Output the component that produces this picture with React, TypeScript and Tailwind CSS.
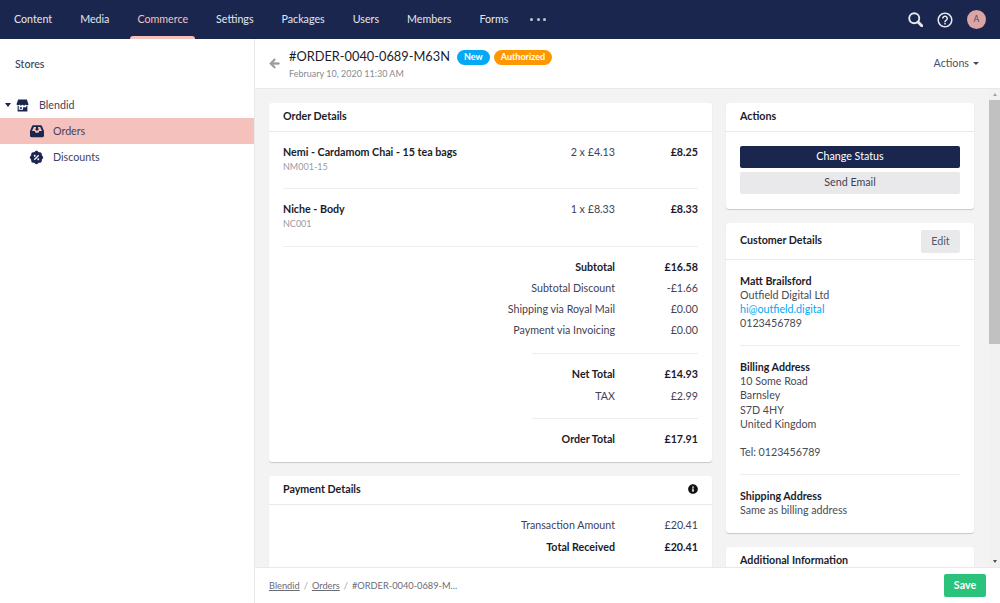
import type { ReactNode } from "react";
import { FaArrowLeft, FaInfoCircle } from "react-icons/fa";
import { MdHelpOutline } from "react-icons/md";
import { RiDiscountPercentFill } from "react-icons/ri";

const navItems = ["Content", "Media", "Commerce", "Settings", "Packages", "Users", "Members", "Forms"];

const SearchIcon = () => (
  <svg viewBox="0 0 24 24" className="w-[15px] h-[15px]" fill="none" stroke="currentColor">
    <circle cx="10" cy="10" r="8" strokeWidth="3" />
    <path d="M16 16l6 6" strokeWidth="4.500" strokeLinecap="round" />
  </svg>
);

const StoreIcon = () => (
  <svg viewBox="0 0 24 24" className="w-[13px] h-[13px] ml-[5px] text-[#1b264f]" fill="currentColor">
    <path d="M4 1h16l3 8.5a2.6 2.6 0 0 1-5 .6 3.2 3.2 0 0 1-6 0 3.2 3.2 0 0 1-6 0 2.6 2.6 0 0 1-5-.6z" />
    <path d="M3 13h2v7h8v-5h6v5h0v-7h2v10H3zM7 15h4v3H7z" />
  </svg>
);

const InboxIcon = () => (
  <svg viewBox="0 0 24 24" className="w-[14px] h-[14px] text-[#1b264f]" fill="currentColor">
    <path fillRule="evenodd" d="M5.5 2h13a2 2 0 0 1 1.8 1.2L24 12v8a2.5 2.5 0 0 1-2.5 2.5h-19A2.5 2.5 0 0 1 0 20v-8l3.7-8.800A2 2 0 0 1 5.500 2zM6.500 5 3.500 12H8l1.500 3h5l1.500-3h4.500l-3-7z" />
    <path d="M10.300 4.500h3.400v3.500H16l-4 4-4-4h2.300z" />
  </svg>
);

const Card = ({ className = "", children }: { className?: string; children: ReactNode }) => (
  <div className={`bg-white rounded-[3px] shadow-[0_1px_1px_rgba(0,0,0,0.18)] ${className}`}>{children}</div>
);

const CardHeader = ({ title, children }: { title: string; children?: ReactNode }) => (
  <div className="h-[29px] shrink-0 px-[14px] pb-[2px] flex items-center justify-between border-b border-[#e9e9eb]">
    <span className="font-bold text-[#1b1b2b]">{title}</span>
    {children}
  </div>
);

const TotalRow = ({ label, value, bold, h = "h-[21px]" }: { label: string; value: string; bold?: boolean; h?: string }) => (
  <div className={`flex items-center justify-end ${h} ${bold ? "font-bold text-[#1b1b2b]" : "text-[#3f4254]"}`}>
    <span>{label}</span>
    <span className="w-[83px] text-right">{value}</span>
  </div>
);

const LineItem = ({ name, sku, qty, total, h }: { name: string; sku: string; qty: string; total: string; h: string }) => (
  <div className={`pt-[13px] flex items-start border-b border-[#eeeeef] ${h}`}>
    <div className="flex-1">
      <div className="font-bold text-[#1b1b2b] leading-[14px]">{name}</div>
      <div className="text-[9px] text-[#9a9aa2] leading-[14px] mt-px">{sku}</div>
    </div>
    <div className="w-[60px] text-right leading-[14px] text-[#3f4254]">{qty}</div>
    <div className="w-[83px] text-right leading-[14px] font-bold text-[#1b1b2b]">{total}</div>
  </div>
);

export default function App() {
  return (
    <div className="w-[1000px] h-[603px] overflow-hidden flex flex-col bg-white text-[10.7px] font-['Lato','Liberation_Sans',sans-serif]">
      {/* Top bar */}
      <div className="h-[39px] shrink-0 bg-[#1b264f] flex items-center justify-between pr-[14px]">
        <div className="flex h-full items-center text-[#e4e6ee] pl-[7px]">
          {navItems.map((item) => (
            <div key={item} className={`relative h-full flex items-center px-[7px] mr-[14px] ${item === "Commerce" ? "text-[#f5c1bc]" : ""}`}>
              {item}
              {item === "Commerce" && (
                <div className="absolute left-0 right-0 bottom-0 h-[3px] bg-[#f5c1bc] rounded-t-[3px]" />
              )}
            </div>
          ))}
          <div className="flex gap-[3.5px] ml-px">
            <div className="w-[3px] h-[3px] rounded-full bg-[#c4c8d6]" />
            <div className="w-[3px] h-[3px] rounded-full bg-[#c4c8d6]" />
            <div className="w-[3px] h-[3px] rounded-full bg-[#c4c8d6]" />
          </div>
        </div>
        <div className="flex items-center gap-[13px] text-[#e9eaf0]">
          <SearchIcon />
          <MdHelpOutline className="w-[18px] h-[18px]" />
          <div className="w-[19px] h-[19px] rounded-full bg-[#d9a5a5] text-[#5c4050] text-[8.5px] flex items-center justify-center">A</div>
        </div>
      </div>

      <div className="flex-1 flex min-h-0">
        {/* Tree */}
        <div className="w-[255px] shrink-0 border-r border-[#e9e9eb] text-[#3f4460]">
          <div className="h-[50px] pl-[15px] flex items-center font-medium text-[#3a3f58]">Stores</div>
          <div className="h-[26px] mt-[3px] flex items-center pl-[5px]">
            <div className="w-0 h-0 border-x-[3px] border-x-transparent border-t-[4px] border-t-[#1b264f]" />
            <StoreIcon />
            <span className="ml-[10px]">Blendid</span>
          </div>
          <div className="h-[26px] flex items-center pl-[30px] bg-[#f5c1bc]">
            <InboxIcon />
            <span className="ml-[9px]">Orders</span>
          </div>
          <div className="h-[26px] flex items-center pl-[29px]">
            <RiDiscountPercentFill className="w-[15px] h-[15px] text-[#1b264f]" />
            <span className="ml-[9px]">Discounts</span>
          </div>
        </div>

        <div className="flex-1 min-w-0 flex flex-col">
          {/* Page header */}
          <div className="h-[50px] shrink-0 border-b border-[#e9e9eb] flex items-center pl-[14px] pr-[21px]">
            <FaArrowLeft className="w-[11px] h-[11px] text-[#9a9a9f] mt-[-1px]" stroke="currentColor" strokeWidth={30} />
            <div className="ml-[9px]">
              <div className="flex items-center gap-[4px] h-[20px]">
                <span className="text-[12.8px] text-[#1b1b2b] mr-[3px]">#ORDER-0040-0689-M63N</span>
                <span className="h-[15px] w-[33px] rounded-full bg-[#03a9f4] text-white font-bold text-[9px] flex items-center justify-center">New</span>
                <span className="h-[15px] w-[58px] rounded-full bg-[#ff9800] text-white font-bold text-[9px] flex items-center justify-center">Authorized</span>
              </div>
              <div className="text-[9px] text-[#8a8a92] leading-[12px] mt-px">February 10, 2020 11:30 AM</div>
            </div>
            <div className="ml-auto flex items-center gap-[4px] text-[#4a4f6a]">
              Actions
              <div className="w-0 h-0 border-x-[3px] border-x-transparent border-t-[3.5px] border-t-[#3f4460]" />
            </div>
          </div>

          {/* Scrolling content */}
          <div className="flex-1 min-h-0 flex bg-[#f4f3f3]">
            <div className="flex-1 min-w-0 overflow-hidden pt-[14px] pl-[14px] flex gap-[14px] items-start">
              <div className="w-[443px] shrink-0 flex flex-col gap-[14px]">
                <Card>
                  <CardHeader title="Order Details" />
                  <div className="px-[14px]">
                    <LineItem h="h-[57px]" name="Nemi - Cardamom Chai - 15 tea bags" sku="NM001-15" qty="2 x £4.13" total="£8.25" />
                    <LineItem h="h-[58px]" name="Niche - Body" sku="NC001" qty="1 x £8.33" total="£8.33" />
                    <div className="pt-[10px] pb-[12px]">
                      <TotalRow label="Subtotal" value="£16.58" bold />
                      <TotalRow label="Subtotal Discount" value="-£1.66" />
                      <TotalRow label="Shipping via Royal Mail" value="£0.00" />
                      <TotalRow label="Payment via Invoicing" value="£0.00" />
                    </div>
                    <div className="border-t border-[#eeeeef] ml-[249px]" />
                    <div className="pt-[9px] pb-[10px]">
                      <TotalRow label="Net Total" value="£14.93" bold h="h-[22px]" />
                      <TotalRow label="TAX" value="£2.99" h="h-[23px]" />
                    </div>
                    <div className="border-t border-[#eeeeef] ml-[249px]" />
                    <div className="pt-[10px] pb-[12px]">
                      <TotalRow label="Order Total" value="£17.91" bold />
                    </div>
                  </div>
                </Card>
                <Card>
                  <CardHeader title="Payment Details">
                    <FaInfoCircle className="w-[10px] h-[10px] text-[#111]" />
                  </CardHeader>
                  <div className="px-[14px] pt-[9px] pb-[13px]">
                    <TotalRow label="Transaction Amount" value="£20.41" h="h-[22px]" />
                    <TotalRow label="Total Received" value="£20.41" bold h="h-[23px]" />
                  </div>
                </Card>
              </div>

              <div className="w-[248px] shrink-0 flex flex-col gap-[14px]">
                <Card>
                  <CardHeader title="Actions" />
                  <div className="pt-[14px] px-[14px] pb-[15px] flex flex-col gap-[4px]">
                    <button className="h-[22px] pb-px rounded-[2px] bg-[#1b264f] text-white">Change Status</button>
                    <button className="h-[22px] pb-px rounded-[2px] bg-[#e9e9eb] text-[#3f4254]">Send Email</button>
                  </div>
                </Card>
                <Card>
                  <div className="h-[37px] pl-[14px] pr-[14px] flex items-center justify-between border-b border-[#e9e9eb]">
                    <span className="font-bold text-[#1b1b2b] -mt-[2px]">Customer Details</span>
                    <button className="h-[23px] w-[39px] rounded-[2px] bg-[#e9e9eb] text-[#55596a]">Edit</button>
                  </div>
                  <div className="px-[14px] leading-[14.2px] text-[#4a4a55]">
                    <div className="pt-[14px] pb-[15px] border-b border-[#eeeeef] leading-[14px]">
                      <div className="font-bold text-[#1b1b2b]">Matt Brailsford</div>
                      <div>Outfield Digital Ltd</div>
                      <div className="text-[#03a9f4]">hi@outfield.digital</div>
                      <div>0123456789</div>
                    </div>
                    <div className="pt-[14px] pb-[15px] border-b border-[#eeeeef]">
                      <div className="font-bold text-[#1b1b2b]">Billing Address</div>
                      <div>10 Some Road</div>
                      <div>Barnsley</div>
                      <div>S7D 4HY</div>
                      <div>United Kingdom</div>
                      <div className="mt-[14px]">Tel: 0123456789</div>
                    </div>
                    <div className="pt-[14px] pb-[16px] leading-[14px]">
                      <div className="font-bold text-[#1b1b2b]">Shipping Address</div>
                      <div>Same as billing address</div>
                    </div>
                  </div>
                </Card>
                <Card>
                  <CardHeader title="Additional Information" />
                </Card>
              </div>
            </div>

            {/* Scrollbar */}
            <div className="w-[11px] shrink-0 flex flex-col items-center bg-[#f1f1f1]">
              <div className="h-[11px] flex items-center justify-center">
                <div className="w-0 h-0 border-x-[2.5px] border-x-transparent border-b-[3px] border-b-[#a3a3a3]" />
              </div>
              <div className="w-full h-[244px] bg-[#c1c1c1]" />
              <div className="mt-auto h-[11px] flex items-center justify-center">
                <div className="w-0 h-0 border-x-[2.5px] border-x-transparent border-t-[3px] border-t-[#505050]" />
              </div>
            </div>
          </div>

          {/* Footer */}
          <div className="h-[36px] shrink-0 border-t border-[#e9e9eb] flex items-center pl-[14px] pr-[14px] bg-white">
            <div className="flex items-center gap-[4px] text-[9.25px] text-[#6b6b75]">
              <span className="underline">Blendid</span>
              <span className="text-[#a3a3a8]">/</span>
              <span className="underline">Orders</span>
              <span className="text-[#a3a3a8]">/</span>
              <span>#ORDER-0040-0689-M...</span>
            </div>
            <button className="ml-auto h-[23px] w-[42px] rounded-[2px] bg-[#2bc37c] text-white font-bold">Save</button>
          </div>
        </div>
      </div>
    </div>
  );
}
